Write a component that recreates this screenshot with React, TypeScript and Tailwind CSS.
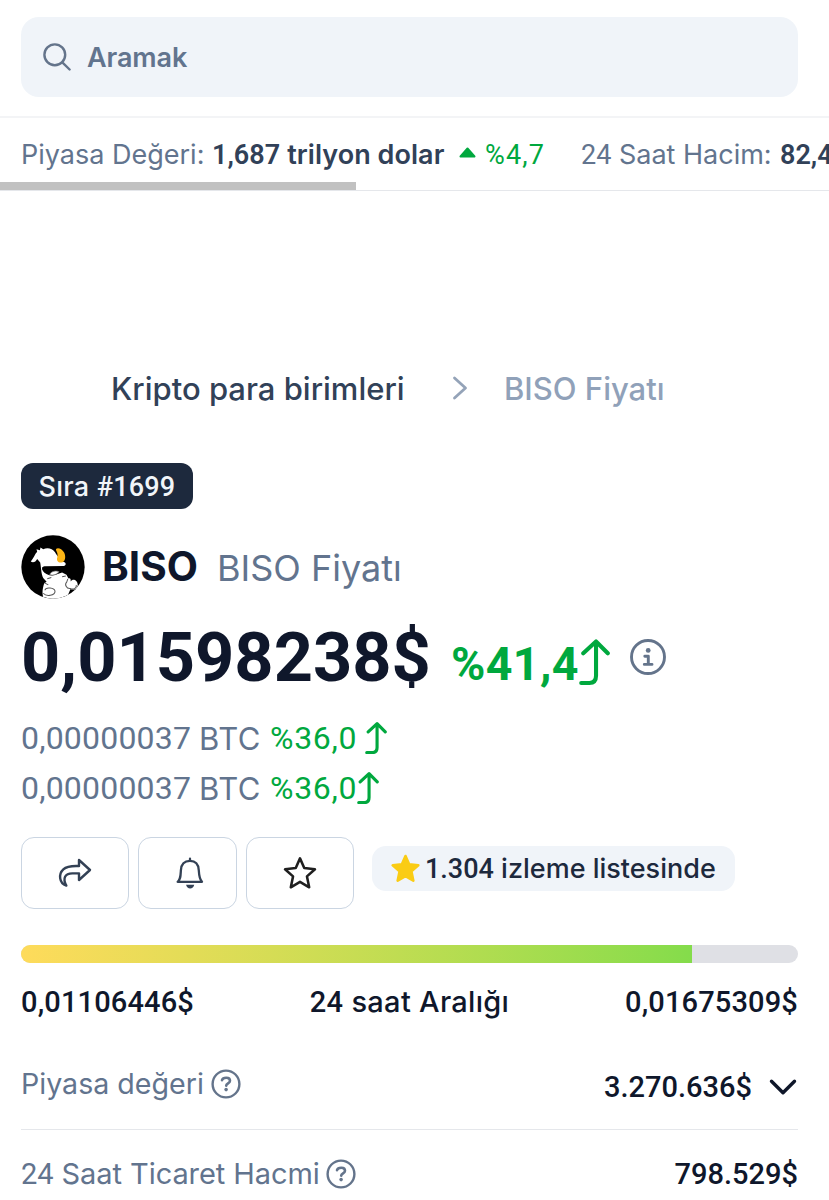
import type { ReactNode } from "react";

/* Letters are set in Inter, runs of figures in Roboto. */
function Text({ children, className = "" }: { children: string; className?: string }) {
  const parts = children.split(/([%#$\d.,]*\d[\d.,$]*)/);
  return (
    <span className={`whitespace-nowrap leading-none ${className}`}>
      {parts.map((p, i) =>
        i % 2 ? (
          <span key={i} className="font-[Roboto,sans-serif]">
            {p}
          </span>
        ) : (
          p
        ),
      )}
    </span>
  );
}

function SearchIcon() {
  return (
    <svg width="28" height="28" viewBox="0 0 28 28" fill="none" stroke="#64748b" strokeWidth="2.4" strokeLinecap="round">
      <circle cx="11.8" cy="11.8" r="10.4" />
      <path d="M19.3 19.3 26.6 26.5" />
    </svg>
  );
}

function UpArrow({ className, stroke }: { className: string; stroke: number }) {
  return (
    <svg className={className} viewBox="0 0 30 45" fill="none" stroke="#00a83e" strokeWidth={stroke} strokeLinecap="round" strokeLinejoin="round">
      <path d="M4 14 16.5 2.4 28 14M16.5 2.4V36Q16.5 43 10 43H2" />
    </svg>
  );
}

function InfoIcon() {
  return (
    <svg width="36" height="36" viewBox="0 0 36 36" fill="none" stroke="#64748b" strokeWidth="2.9" strokeLinecap="round" strokeLinejoin="round">
      <circle cx="18" cy="18" r="16.5" />
      <circle cx="18.2" cy="11.4" r="2.4" fill="#64748b" stroke="none" />
      <path d="M14.8 17.3H18.3V25.3M14.3 25.4H22" />
    </svg>
  );
}

function HelpIcon() {
  return (
    <svg width="30" height="30" viewBox="0 0 30 30" fill="none" stroke="#64748b" strokeWidth="2.4" strokeLinecap="round">
      <circle cx="15" cy="15" r="13.4" />
      <path strokeWidth="2.6" d="M11 11.2C12 8 19 7.8 19 11.7C19 14.4 15.4 14.2 15.2 16.6" />
      <circle cx="15.1" cy="20.6" r="1.8" fill="#64748b" stroke="none" />
    </svg>
  );
}

function CoinLogo() {
  return (
    <svg width="64" height="64" viewBox="18 21 190 190">
      <defs>
        <clipPath id="coin">
          <circle cx="113" cy="116" r="94" />
        </clipPath>
      </defs>
      <circle cx="113" cy="116" r="94" fill="#000" />
      <g clipPath="url(#coin)">
        <path
          fill="#fff"
          d="M47 100C55 91 59 78 66 71L64 63L74 66L76 58L84 63C96 57 111 60 119 72C126 83 136 98 147 102C153 105 151 112 145 113L88 114C80 116 80 121 84 128C92 141 112 145 127 137L140 132L153 139L159 150C164 147 167 153 165 159C174 147 189 158 186 173C183 183 173 185 165 181L157 200L120 214L84 205C80 195 82 178 87 164L94 160L84 149C78 138 78 119 75 103L66 92C62 100 55 105 47 100Z"
        />
        <path d="M82 116C103 119 125 117 145 114C146 124 139 130 130 133C117 138 102 140 88 132C82 128 79 122 82 116Z" fill="#000" />
        <path d="M103 138C109 128 122 126 131 130C125 137 115 143 103 138Z" fill="#fff" stroke="#777" strokeWidth="2" />
        <path d="M122 66C120 57 138 58 146 73C152 85 150 101 138 103C125 103 123 94 126 86C128 78 125 72 122 66Z" fill="#fdb515" />
        <path
          d="M89 185C91 174 118 177 119 188C119 201 93 205 84 194M88 163L99 169M157 151L154 160C146 168 153 181 164 180C172 184 184 180 182 170M140 145L151 143M96 151L108 147"
          fill="none"
          stroke="#555"
          strokeWidth="3"
        />
      </g>
    </svg>
  );
}

function ShareIcon() {
  return (
    <svg width="34" height="31" viewBox="175 112 102 93" fill="none" stroke="#334155" strokeWidth="7.2" strokeLinecap="round" strokeLinejoin="round">
      <path d="M200 195C178 188 176 160 191 146C204 134 222 136 238 136V118L271 148L238 178V158H218C196 158 188 173 200 195Z" />
    </svg>
  );
}

function BellIcon() {
  return (
    <svg className="ml-[4px]" width="28" height="32" viewBox="526 109 86 98" fill="none" stroke="#334155" strokeWidth="7" strokeLinecap="round" strokeLinejoin="round">
      <path d="M569 114V120M531 185H606C598 178 597 168 596 150C595 131 586 121 569 121C552 121 542 131 541 150C540 168 540 178 531 185Z" />
      <path d="M557 194H582C580 209 559 209 557 194Z" fill="#334155" stroke="none" />
    </svg>
  );
}

function StarIcon({ className, filled }: { className: string; filled?: boolean }) {
  return (
    <svg
      className={className}
      viewBox="0 0 100 98"
      fill={filled ? "#facc15" : "none"}
      stroke={filled ? "#facc15" : "#1f1f1f"}
      strokeWidth={filled ? 9 : 7.5}
      strokeLinejoin="round"
    >
      <path d="M50 6 62.5 34.5 94 38 70.5 59 77 91 50 75 23 91 29.5 59 6 38 37.5 34.5Z" />
    </svg>
  );
}

function ActionButton({ className, children }: { className: string; children: ReactNode }) {
  return (
    <button className={`flex h-[72px] items-center justify-center rounded-[13px] border-[1.5px] border-slate-300 ${className}`}>
      {children}
    </button>
  );
}

export default function App() {
  return (
    <div className="h-[1200px] w-[829px] overflow-hidden bg-white font-[Inter,sans-serif] text-slate-500">
      <header className="h-[118px] border-b-2 border-gray-100 px-[21px] pt-[17px]">
        <div className="flex h-20 w-[777px] items-center rounded-[18px] bg-[#f0f4f9] pl-[22px]">
          <SearchIcon />
          <Text className="ml-[16px] text-[27px] font-semibold tracking-[-0.1px]">Aramak</Text>
        </div>
      </header>

      <section className="h-[73px] overflow-hidden border-b border-gray-200">
        <div className="flex h-16 w-[1000px] items-center pl-[21px] pt-[9px] text-[27px]">
          <Text className="w-[191px]">Piyasa Değeri:</Text>
          <Text className="w-[247px] font-semibold tracking-[0.05px] text-slate-700">1,687 trilyon dolar</Text>
          <svg className="mr-[9px] -mt-1" width="17" height="11" viewBox="0 0 17 11">
            <path d="M8.5 1.5 15.5 9.5H1.5Z" fill="#00a83e" stroke="#00a83e" strokeWidth="2" strokeLinejoin="round" />
          </svg>
          <Text className="w-[96px] tracking-[1.2px] text-[#00a83e]">%4,7</Text>
          <Text className="w-[199px]">24 Saat Hacim:</Text>
          <Text className="font-semibold text-slate-700">82,4 milyar dolar</Text>
        </div>
        <div className="h-2 w-[356px] bg-[#c1c1c1]" />
      </section>

      <nav className="mt-[167px] flex h-[60px] items-center pl-[111px] text-[31px] font-medium">
        <Text className="w-[341px] text-slate-700">Kripto para birimleri</Text>
        <svg width="16" height="24" viewBox="0 0 16 24" fill="none" stroke="#94a3b8" strokeWidth="2.8" strokeLinecap="round" strokeLinejoin="round">
          <path d="M2.5 2 13.5 12 2.5 22" />
        </svg>
        <Text className="ml-[36px] text-slate-400">BISO Fiyatı</Text>
      </nav>

      <main className="px-[21px] pt-[45px]">
        <div className="flex h-[46px] w-[172px] items-center justify-center rounded-[12px] bg-slate-800 pt-[2px] text-slate-100">
          <Text className="text-[27px] font-medium tracking-[0.2px]">Sıra #1699</Text>
        </div>

        <div className="mt-[26px] flex h-16 items-center">
          <CoinLogo />
          <div className="flex items-baseline pl-[17px]">
            <Text className="w-[115px] text-[40.5px] font-bold text-slate-900">BISO</Text>
            <Text className="text-[36px]">BISO Fiyatı</Text>
          </div>
        </div>

        <div className="mt-[12px] flex h-[90px] items-start">
          <div className="flex w-[558px] items-baseline pt-[12px]">
            <Text className="w-[430px] text-[68.5px] font-bold text-slate-900">0,01598238$</Text>
            <Text className="-translate-y-px text-[46.5px] font-bold tracking-[0.4px] text-[#00a83e]">%41,4</Text>
          </div>
          <UpArrow className="mt-[28px] h-[46px] w-[31px]" stroke={4} />
          <div className="ml-[20px] mt-[28px]">
            <InfoIcon />
          </div>
        </div>

        <div className="mt-[12px] flex h-[50px] items-center text-[32px]">
          <Text className="w-[178px] tracking-[0.2px]">0,00000037</Text>
          <Text className="w-[71px] text-[31px] tracking-[0.6px]">BTC</Text>
          <Text className="w-[95px] tracking-[0.7px] text-[#00a83e]">%36,0</Text>
          <UpArrow className="h-8 w-[22px]" stroke={4.4} />
        </div>
        <div className="flex h-[50px] items-center text-[32px]">
          <Text className="w-[178px] tracking-[0.2px]">0,00000037</Text>
          <Text className="w-[71px] text-[31px] tracking-[0.6px]">BTC</Text>
          <Text className="w-[87px] tracking-[0.7px] text-[#00a83e]">%36,0</Text>
          <UpArrow className="h-8 w-[22px]" stroke={4.4} />
        </div>

        <div className="mt-[24px] flex h-[72px] items-start">
          <ActionButton className="w-[108px]">
            <ShareIcon />
          </ActionButton>
          <ActionButton className="ml-[9px] w-[99px]">
            <BellIcon />
          </ActionButton>
          <ActionButton className="ml-[9px] w-[108px]">
            <StarIcon className="h-[34px] w-[34px]" />
          </ActionButton>
          <div className="ml-[18px] mt-[9px] flex h-[45px] w-[363px] items-center rounded-[14px] bg-[#f0f4f9] pl-[19px] text-slate-800">
            <StarIcon className="h-[29px] w-[29px]" filled />
            <Text className="ml-[5px] pt-px text-[27px] font-medium">1.304 izleme listesinde</Text>
          </div>
        </div>

        <div className="mt-9 h-[18px] w-[777px] overflow-hidden rounded-full bg-[#dfe0e5]">
          <div className="h-full w-[671px] bg-linear-to-r from-[#fedb5b] to-[#84dc4b]" />
        </div>

        <div className="mt-[15px] flex h-12 w-[777px] items-center justify-between text-[29px] font-medium text-slate-900">
          <Text className="tracking-[0.15px]">0,01106446$</Text>
          <Text className="tracking-[0.3px]">24 saat Aralığı</Text>
          <Text className="tracking-[0.15px]">0,01675309$</Text>
        </div>

        <div className="mt-[12px] flex h-[92px] w-[777px] justify-between border-b border-gray-200">
          <div className="flex h-[91px] items-center text-[28.6px]">
            <Text className="w-[190px] pt-[2px]">Piyasa değeri</Text>
            <HelpIcon />
          </div>
          <div className="flex h-[98px] items-center text-slate-900">
            <Text className="text-[29px] font-medium">3.270.636$</Text>
            <svg className="ml-[17px] mr-px" width="28" height="18" viewBox="0 0 28 18" fill="none" stroke="#0f172a" strokeWidth="3.4" strokeLinecap="round" strokeLinejoin="round">
              <path d="M2.5 3.2 14 14.7 25.5 3.2" />
            </svg>
          </div>
        </div>

        <div className="flex h-[88px] w-[777px] items-center justify-between text-[29px]">
          <div className="flex items-center">
            <Text className="w-[305px] tracking-[-0.07px]">24 Saat Ticaret Hacmi</Text>
            <HelpIcon />
          </div>
          <Text className="font-medium text-slate-900">798.529$</Text>
        </div>
      </main>
    </div>
  );
}
